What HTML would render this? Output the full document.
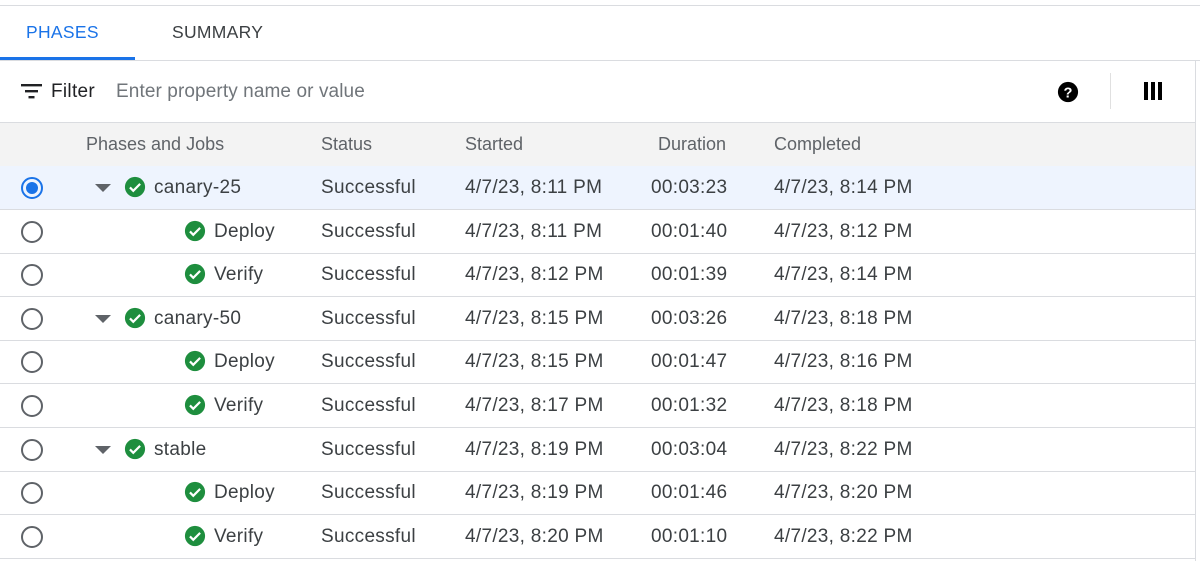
<!DOCTYPE html><html><head><style>
body{margin:0;width:1200px;height:561px;background:#fff;font-family:"Liberation Sans",sans-serif;position:relative;overflow:hidden}
.a{position:absolute}
.top{left:0;top:5px;width:1200px;height:1px;background:#dadce0}
.tab{top:22px;font-size:17.5px;letter-spacing:.3px}
.row{position:absolute;left:0;width:1195px;height:43px;border-bottom:1px solid #dadce0;font-size:19px;letter-spacing:.3px;color:#3c4043}
.row span{position:absolute;top:11px}
.rad{position:absolute;left:21px;top:11px;border:2px solid #5f6368;border-radius:50%;box-sizing:border-box;width:22px;height:22px}
.sel{border-color:#1a73e8}
.sel:after{content:"";position:absolute;left:3px;top:3px;width:12px;height:12px;border-radius:50%;background:#1a73e8}
.chk{position:absolute;top:10px}
.tri{position:absolute;left:95px;top:18px;width:0;height:0;border-left:8px solid transparent;border-right:8px solid transparent;border-top:8px solid #5f6368}
</style></head><body>
<div class="a top"></div>
<div class="a tab" style="left:26px;color:#1a73e8">PHASES</div>
<div class="a tab" style="left:172px;color:#3c4043">SUMMARY</div>
<div class="a" style="left:0;top:57px;width:135px;height:3px;background:#1a73e8"></div>
<div class="a" style="left:0;top:60px;width:1200px;height:1px;background:#dadce0"></div>
<div class="a" style="left:1195px;top:61px;width:1px;height:500px;background:#dadce0"></div>
<svg class="a" style="left:21px;top:83px" width="22" height="16"><rect x="0" y="1" width="21" height="2.4" fill="#202124"/><rect x="4" y="7" width="13" height="2.4" fill="#202124"/><rect x="7.5" y="13" width="6" height="2.4" fill="#202124"/></svg>
<div class="a" style="left:51px;top:81px;font-size:19px;color:#202124;letter-spacing:.3px">Filter</div>
<div class="a" style="left:116px;top:81px;font-size:19px;color:#70757a;letter-spacing:.1px">Enter property name or value</div>
<svg class="a" style="left:1057px;top:81px" width="22" height="22" viewBox="0 0 24 24"><circle cx="12" cy="12" r="11" fill="#000"/><text x="12" y="18" text-anchor="middle" font-size="16" font-weight="bold" fill="#fff" font-family="Liberation Sans">?</text></svg>
<div class="a" style="left:1110px;top:73px;width:1px;height:36px;background:#e0e0e0"></div>
<svg class="a" style="left:1144px;top:82px" width="19" height="19"><rect x="0" y="0" width="4" height="18" fill="#000"/><rect x="7" y="0" width="4" height="18" fill="#000"/><rect x="14" y="0" width="4" height="18" fill="#000"/></svg>
<div class="a" style="left:0;top:122px;width:1195px;height:43px;background:#f3f3f3;border-top:1px solid #dadce0;border-bottom:1px solid #dadce0;font-size:18px;color:#5f6368">
<span class="a" style="left:86px;top:11px">Phases and Jobs</span><span class="a" style="left:321px;top:11px">Status</span><span class="a" style="left:465px;top:11px">Started</span><span class="a" style="left:658px;top:11px">Duration</span><span class="a" style="left:774px;top:11px">Completed</span></div>
<div id="rows"></div>
<script>
var d=[["canary-25",1,"4/7/23, 8:11 PM","00:03:23","4/7/23, 8:14 PM"],["Deploy",0,"4/7/23, 8:11 PM","00:01:40","4/7/23, 8:12 PM"],["Verify",0,"4/7/23, 8:12 PM","00:01:39","4/7/23, 8:14 PM"],["canary-50",1,"4/7/23, 8:15 PM","00:03:26","4/7/23, 8:18 PM"],["Deploy",0,"4/7/23, 8:15 PM","00:01:47","4/7/23, 8:16 PM"],["Verify",0,"4/7/23, 8:17 PM","00:01:32","4/7/23, 8:18 PM"],["stable",1,"4/7/23, 8:19 PM","00:03:04","4/7/23, 8:22 PM"],["Deploy",0,"4/7/23, 8:19 PM","00:01:46","4/7/23, 8:20 PM"],["Verify",0,"4/7/23, 8:20 PM","00:01:10","4/7/23, 8:22 PM"]];
var h="";d.forEach(function(r,i){var t=166+i*43.6;var cx=r[1]?124:184;
h+='<div class="row" style="top:'+t+'px;'+(i==0?'background:#eef4fe':'')+'"><div class="rad'+(i==0?' sel':'')+'"></div>'+(r[1]?'<div class="tri"></div>':'')+
'<svg class="chk" style="left:'+cx+'px" width="22" height="22" viewBox="0 0 24 24"><circle cx="12" cy="12" r="11" fill="#1e8e3e"/><path d="M6.5 12.5l3.6 3.6 7.5-7.5" stroke="#fff" stroke-width="2.4" fill="none"/></svg>'+
'<span style="left:'+(cx+30)+'px">'+r[0]+'</span><span style="left:321px">Successful</span><span style="left:465px">'+r[2]+'</span><span style="left:651px">'+r[3]+'</span><span style="left:774px">'+r[4]+'</span></div>';});
document.getElementById("rows").innerHTML=h;
</script>
</body></html>
